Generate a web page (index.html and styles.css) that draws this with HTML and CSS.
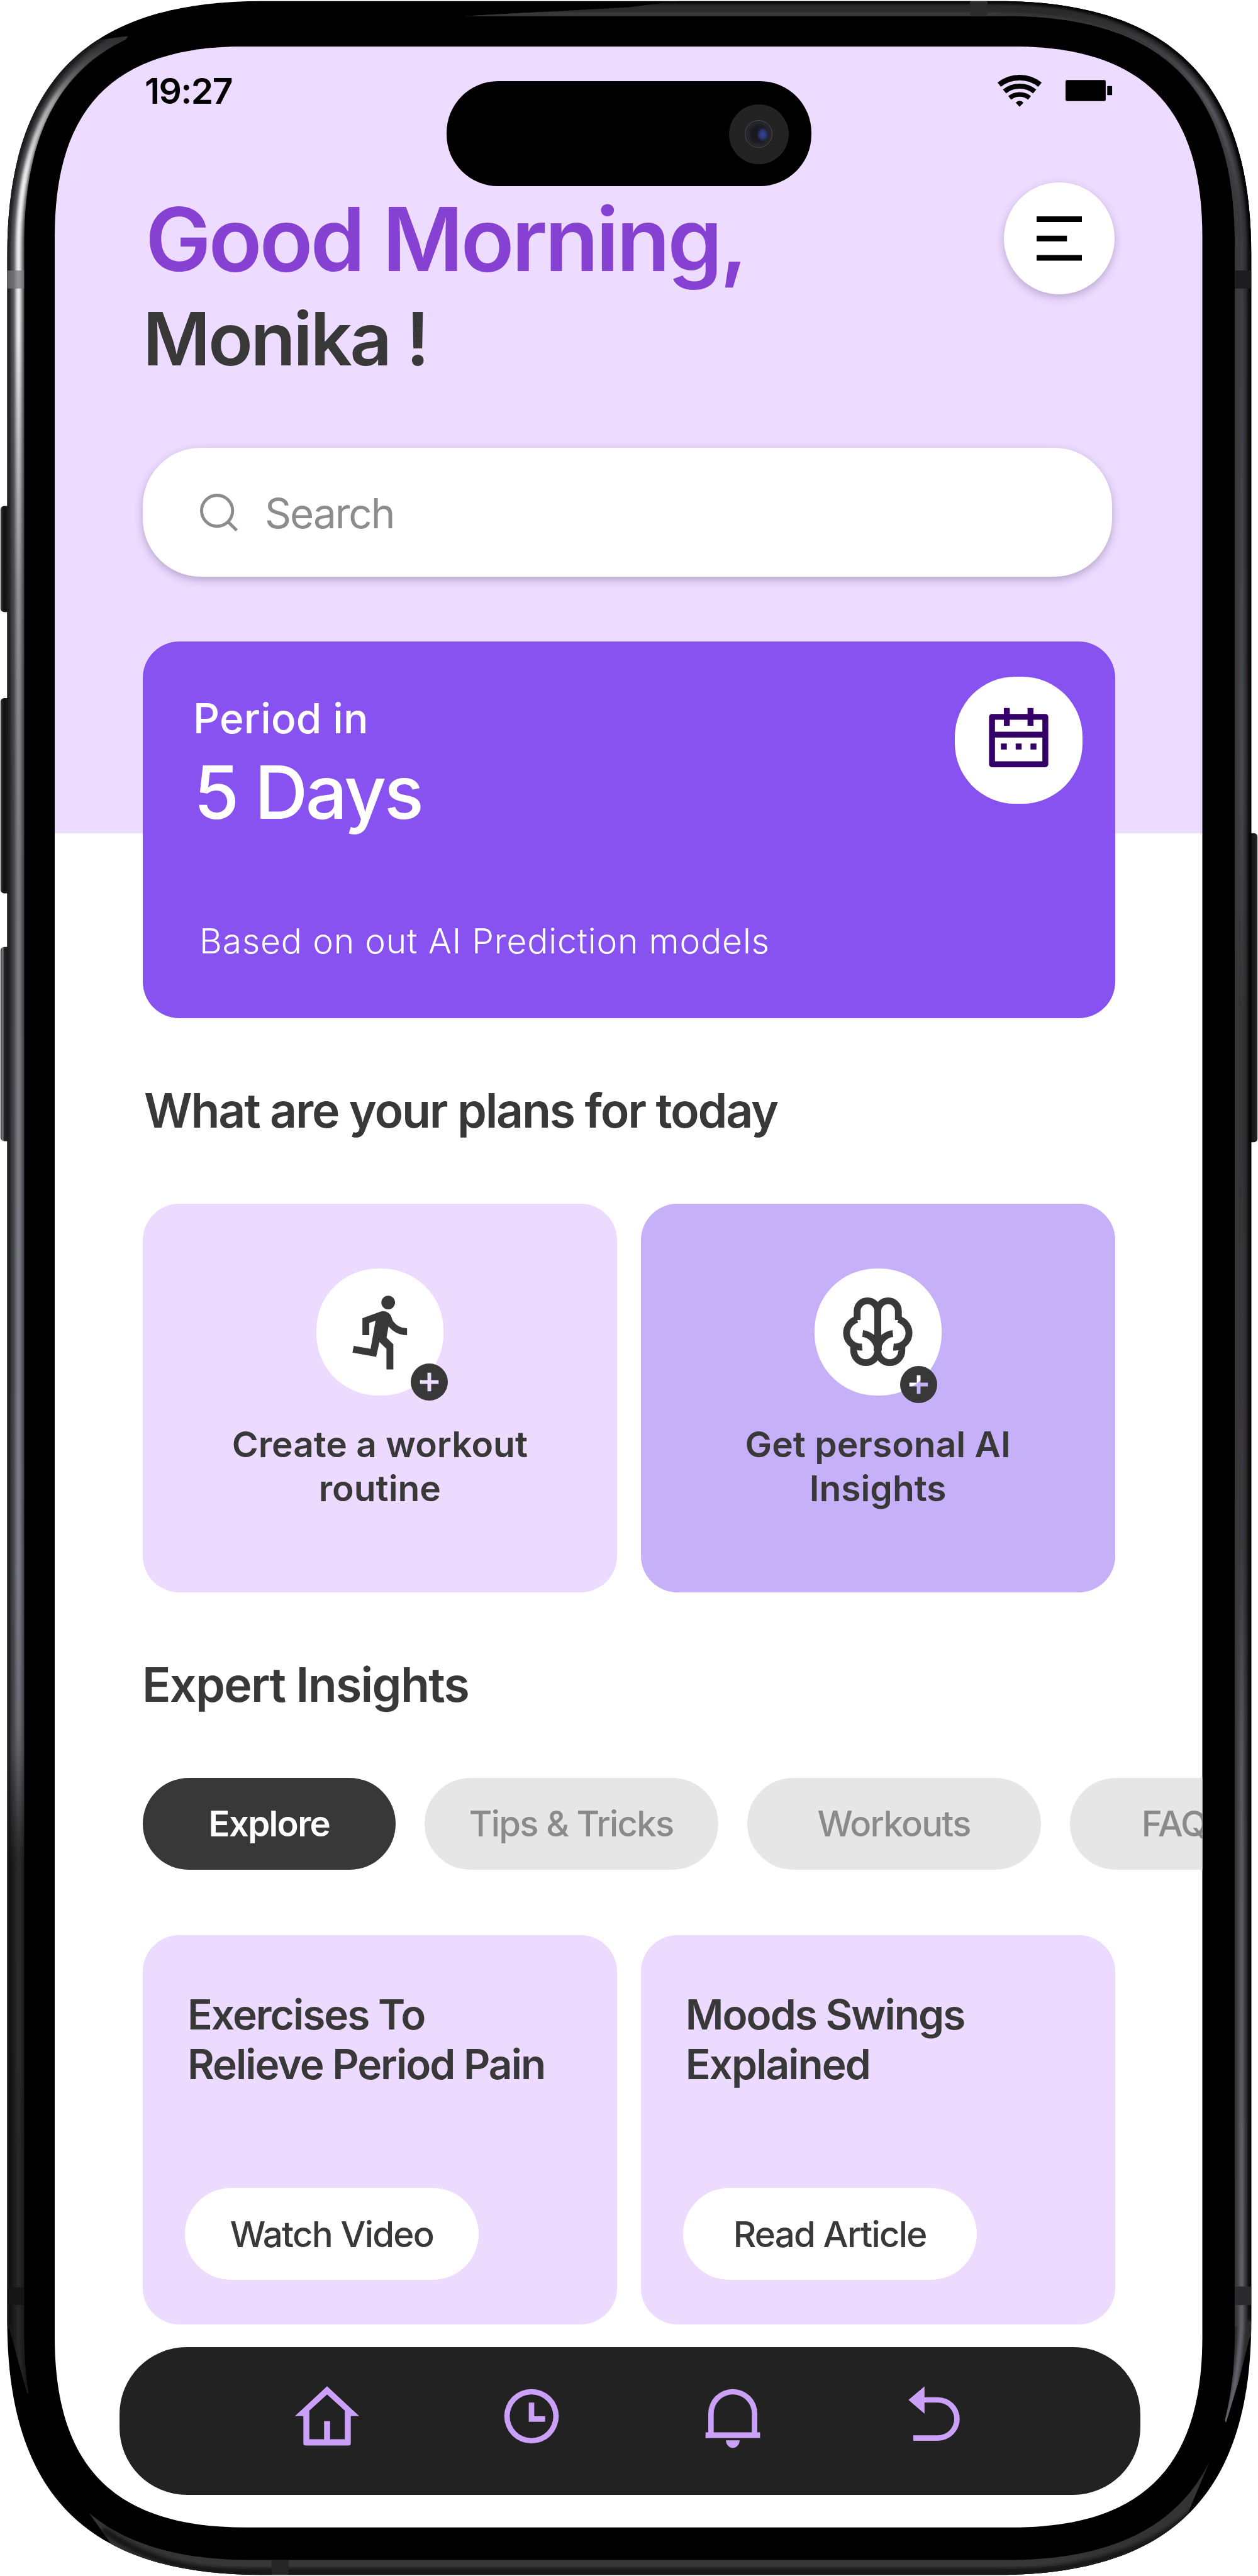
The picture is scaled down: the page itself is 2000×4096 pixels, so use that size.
FILE: index.html
```html
<!DOCTYPE html>
<html lang="en">
<head>
<meta charset="utf-8">
<title>Cycle tracker</title>
<link rel="stylesheet" href="styles.css">
</head>
<body>
<div class="phone">
  <svg class="frame" viewBox="0 0 2442 5000" preserveAspectRatio="none" aria-hidden="true">
    <defs>
      <clipPath id="band"><path clip-rule="evenodd" d="M14 496C14 158 170 2 508 2H1935C2273 2 2429 158 2429 496V4504C2429 4842 2273 4998 1935 4998H508C170 4998 14 4842 14 4504ZM47 475C47 171 187 31 491 31H1953C2257 31 2397 171 2397 475V4525C2397 4829 2257 4969 1953 4969H491C187 4969 47 4829 47 4525Z"/></clipPath>
      <clipPath id="leftCut"><path d="M249 70L187 78L0 190V4500L18 4520L53 4646L90 4646V300Z"/></clipPath>
      <clipPath id="topCut"><path d="M905 31L1221 14L1330 0H2442V4500L2425 4540L2405 4620L2380 4702L2350 4640V600L1900 120H905Z"/></clipPath>
      <clipPath id="bottomCut"><path d="M173 4878L223 4948L260 5000H2200L2305 4880L2347 4780L2200 4800L1900 4900H400Z"/></clipPath>
      <filter id="soft" x="-20%" y="-5%" width="140%" height="110%"><feGaussianBlur stdDeviation="3"/></filter>
      <linearGradient id="leftBase" gradientUnits="userSpaceOnUse" x1="0" y1="0" x2="0" y2="5000">
        <stop offset="0" stop-color="#2c2c2e"/><stop offset=".1" stop-color="#4a4a4e"/><stop offset=".3" stop-color="#3c3c40"/><stop offset=".6" stop-color="#404047"/><stop offset=".68" stop-color="#404045"/><stop offset=".725" stop-color="#191919"/><stop offset="1" stop-color="#181818"/>
      </linearGradient>
      <linearGradient id="leftShine" gradientUnits="userSpaceOnUse" x1="0" y1="0" x2="0" y2="5000">
        <stop offset=".015" stop-color="#555" stop-opacity="0"/><stop offset=".04" stop-color="#aaa"/><stop offset=".07" stop-color="#f4f4f4"/><stop offset=".13" stop-color="#eee"/><stop offset=".17" stop-color="#c4c4c8"/><stop offset=".23" stop-color="#929297"/><stop offset=".35" stop-color="#7a7a80"/><stop offset=".6" stop-color="#7f7e87"/><stop offset=".67" stop-color="#6e6d75"/><stop offset=".72" stop-color="#2b2b2b"/><stop offset="1" stop-color="#242424"/>
      </linearGradient>
      <linearGradient id="rightShine" gradientUnits="userSpaceOnUse" x1="0" y1="0" x2="0" y2="5000">
        <stop offset="0" stop-color="#232323"/><stop offset=".015" stop-color="#3c3c40"/><stop offset=".04" stop-color="#5b5a63"/><stop offset=".08" stop-color="#3c3c40"/><stop offset=".2" stop-color="#46464c"/><stop offset=".3" stop-color="#4c4b54"/><stop offset=".4" stop-color="#343434"/><stop offset=".6" stop-color="#3c3b42"/><stop offset=".68" stop-color="#5c5b64"/><stop offset="1" stop-color="#6c6a73"/>
      </linearGradient>
      <linearGradient id="bottomMetal" gradientUnits="userSpaceOnUse" x1="0" y1="4955" x2="0" y2="5000">
        <stop offset="0" stop-color="#343434"/><stop offset=".55" stop-color="#383838"/><stop offset=".75" stop-color="#242426"/><stop offset="1" stop-color="#161617"/>
      </linearGradient>
      <linearGradient id="key" x1="0" x2="1"><stop offset="0" stop-color="#3a3a3c"/><stop offset=".3" stop-color="#101010"/><stop offset="1" stop-color="#262626"/></linearGradient>
      <linearGradient id="keyLit" x1="0" x2="1"><stop offset="0" stop-color="#2a2a2c"/><stop offset=".18" stop-color="#808086"/><stop offset=".36" stop-color="#1c1c1c"/><stop offset="1" stop-color="#2c2c2e"/></linearGradient>
    </defs>
    <rect x="1" y="982" width="22" height="206" rx="7" fill="url(#key)"/>
    <rect x="1" y="1355" width="22" height="379" rx="7" fill="url(#key)"/>
    <rect x="1" y="1838" width="22" height="377" rx="7" fill="url(#keyLit)"/>
    <rect x="2420" y="1617" width="21" height="600" rx="7" fill="url(#key)"/>
    <path d="M14 496C14 158 170 2 508 2H1935C2273 2 2429 158 2429 496V4504C2429 4842 2273 4998 1935 4998H508C170 4998 14 4842 14 4504Z"/>
    <g clip-path="url(#band)">
      <g clip-path="url(#leftCut)" fill="none">
        <path d="M491 17C180 17 31 171 31 485V4515C31 4750 90 4800 150 4850" stroke="url(#leftBase)" stroke-width="36"/>
        <g filter="url(#soft)">
          <path d="M495 22C186 22 36 175 36 485V4515C36 4750 90 4800 150 4850" stroke="url(#leftShine)" stroke-width="12"/>
          <path d="M500 4C175 4 15 160 15 490V4515" stroke="#0c0c0d" stroke-width="7"/>
        </g>
      </g>
      <g clip-path="url(#topCut)" fill="none">
        <path d="M900 17H1944C2258 17 2413 171 2413 485V4515C2413 4600 2400 4700 2370 4760" stroke="#2b2b2b" stroke-width="36"/>
        <path d="M900 28H1944C2250 28 2401 175 2401 485V4515" stroke="#383838" stroke-width="9"/>
        <g filter="url(#soft)">
          <path d="M1944 20C2255 20 2410 171 2410 485V4515C2405 4600 2395 4650 2375 4720" stroke="url(#rightShine)" stroke-width="10"/>
          <path d="M900 2H1935C2273 2 2428 160 2428 496V4504" stroke="#000" stroke-width="10"/>
        </g>
      </g>
      <g clip-path="url(#bottomCut)">
        <rect x="150" y="4750" width="2250" height="250" fill="url(#bottomMetal)"/>
        <path d="M200 4910C290 4975 380 4993 508 4993H1935C2100 4993 2240 4950 2320 4870" fill="none" stroke="#141415" stroke-width="12" filter="url(#soft)"/>
      </g>
      <g fill="#1c1c1e">
        <rect x="14" y="525" width="33" height="35" fill="#77777b" fill-opacity=".75"/>
        <rect x="2397" y="525" width="33" height="35"/>
        <rect x="1883" y="0" width="34" height="31" fill="#2c2c2e"/>
        <rect x="2397" y="4438" width="33" height="36" fill="#2a2a2e"/>
        <rect x="14" y="4440" width="33" height="34" fill="#151515"/>
        <rect x="527" y="4969" width="33" height="31" fill="#262626"/>
      </g>
    </g>
  </svg>

  <main class="screen">
    <div class="island"><span class="camera"><i class="lens"></i></span></div>
    <header class="status">
      <span class="time">19:27</span>
      <span class="status-icons">
        <svg class="wifi" viewBox="1934 144 88 63"><g fill="none" stroke="#000"><path stroke-width="10.5" d="M1938.4 164.1A63.7 63.7 0 0 1 2017.6 164.1"/><path stroke-width="10" d="M1948.7 177.2A47 47 0 0 1 2007.3 177.2"/><path stroke-width="9" d="M1958.7 189.7A31 31 0 0 1 1997.3 189.7"/></g><path d="M1970.5 199Q1978 192 1985.5 199L1978 207Z"/></svg>
        <svg class="battery" viewBox="0 0 91 41"><rect width="78" height="41" rx="3"/><rect x="81" y="11.5" width="9.5" height="18" rx="1.5"/></svg>
      </span>
    </header>

    <section class="greeting">
      <div>
        <h1 class="hello">Good Morning,</h1>
        <p class="name">Monika !</p>
      </div>
      <button class="menu" aria-label="Menu"><svg viewBox="0 0 88 86"><path d="M0 0H88V11H0ZM0 37.500H59V48.500H0ZM0 75H88V86H0Z"/></svg></button>
    </section>

    <div class="search">
      <svg viewBox="0 0 73 73" fill="none" stroke="#8c8c8c" stroke-width="6"><circle cx="33" cy="33" r="30"/><path d="M54 54L71 71"/></svg>
      <span class="search-text">Search</span>
    </div>

    <section class="prediction">
      <div class="prediction-copy">
        <p class="period">Period in</p>
        <p class="days">5 Days</p>
        <p class="based">Based on out AI Prediction models</p>
      </div>
      <span class="calendar"><svg viewBox="0 0 24 24" fill="#340068"><path fill-rule="evenodd" d="M7 1h2v2h6V1h2v2h4a1 1 0 0 1 1 1v16a1 1 0 0 1-1 1H3a1 1 0 0 1-1-1V4a1 1 0 0 1 1-1h4ZM4 5v4h16V5h-3v2h-2V5H9v2H7V5ZM4 11v8h16v-8ZM6 13h2v2H6ZM11 13h2v2h-2ZM16 13h2v2h-2Z"/></svg></span>
    </section>

    <h2 class="title plans-title">What are your plans for today</h2>
    <section class="pair plans">
      <article class="plan">
        <span class="disc">
          <svg class="glyph" viewBox="-1 0 24 24"><path d="M9.830 8.790L8 9.456V13H6V8.050h.015l5.268-1.918c.244-.093.510-.140.782-.131a2.616 2.616 0 0 1 2.427 1.820c.186.583.356.977.510 1.182A4.992 4.992 0 0 0 19 11v2a6.986 6.986 0 0 1-5.402-2.547l-.581 3.297L15 15.670V23h-2v-5.986l-2.050-1.987-.947 4.298-6.894-1.215.348-1.970 4.924.868zM13.500 5.500a2 2 0 1 1 0-4 2 2 0 0 1 0 4z"/></svg>
          <svg class="plus" viewBox="2 2 20 20"><path d="M12 22a10 10 0 1 1 0-20 10 10 0 0 1 0 20zM11 11H7v2h4v4h2v-4h4v-2h-4V7h-2z"/></svg>
        </span>
        <p class="plan-text">Create a workout<br>routine</p>
      </article>
      <article class="plan plan-deep">
        <span class="disc">
          <svg class="glyph" viewBox="-12 -12 24 24" fill="none" stroke="#383838" stroke-width="2"><path id="lobe" d="M0 2V-6A3 3 0 0 0-6-6V-3.400M-6-3.600A4.100 4.100 0 0 0-4.550 4.450M-7 3.800V5.500A3.500 3.500 0 0 0 0 5.500A5 5 0 0 0-4.400.540"/><use href="#lobe" transform="scale(-1 1)"/><path fill="#383838" stroke="none" d="M-1 1L1 1L1.200 5.500H-1.200Z"/></svg>
          <svg class="plus" viewBox="2 2 20 20"><path d="M12 22a10 10 0 1 1 0-20 10 10 0 0 1 0 20zM11 11H7v2h4v4h2v-4h4v-2h-4V7h-2z"/></svg>
        </span>
        <p class="plan-text">Get personal AI<br>Insights</p>
      </article>
    </section>

    <h2 class="title expert-title">Expert Insights</h2>
    <nav class="chips">
      <span class="chip chip-on">Explore</span>
      <span class="chip">Tips &amp; Tricks</span>
      <span class="chip">Workouts</span>
      <span class="chip chip-last">FAQs</span>
    </nav>

    <section class="pair insights">
      <article class="insight"><h3>Exercises To<br>Relieve Period Pain</h3><a class="action">Watch Video</a></article>
      <article class="insight"><h3>Moods Swings<br>Explained</h3><a class="action">Read Article</a></article>
    </section>

    <nav class="tabs">
      <svg viewBox="0 0 24 24"><path fill-rule="evenodd" d="M12 1L23.800 11.950H20.700V22a.75.75 0 0 1-.75.75H4.050A.75.75 0 0 1 3.300 22V11.950H.200ZM12 4L5.500 9.900V20.400H10.900V13.800H13.100V20.400H18.500V9.900Z"/></svg>
      <svg viewBox="0 0 24 24"><path fill-rule="evenodd" d="M12 2a10 10 0 1 1 0 20 10 10 0 0 1 0-20ZM12 4a8 8 0 1 0 0 16 8 8 0 0 0 0-16ZM11 7h2v5h4v2h-6Z"/></svg>
      <svg viewBox="0 0 24 24"><path fill-rule="evenodd" d="M3 17.900V11a9 9 0 0 1 18 0V17.900H22V20H2V17.900ZM5 17.900H19V11A7 7 0 0 0 5 11ZM9.500 20.800H14.500A2.500 2.800 0 0 1 9.500 20.800Z"/></svg>
      <svg viewBox="0 0 24 24"><path d="M8.500 5H13.400a8 8 0 0 1 0 16H4.400v-2h9a6 6 0 0 0 0-12H8.500v4.050L2.600 6 8.500 1.050z"/></svg>
    </nav>
  </main>
</div>
</body>
</html>
```
FILE: styles.css
```css
* { box-sizing: border-box; margin: 0; padding: 0; }
body { background: #fff; font-family: Inter, sans-serif; color: #383838; }
.phone { position: relative; width: 2000px; height: 4096px; padding: 73.700px 88.500px 77px 87px; overflow: hidden; }
.frame { position: absolute; left: 0; top: 0; width: 2000px; height: 4096px; }
.screen {
  position: relative; height: 3945px; padding: 39px 139px 0 140px; overflow: hidden;
  display: flex; flex-direction: column;
  background: linear-gradient(#eddcff 1250.800px, #fff 1250.800px);
  clip-path: path("M0 303C0 95.400 95.400 0 303 0H1521.500C1729 0 1824.500 95.400 1824.500 303V3642C1824.500 3849.600 1729 3945 1521.500 3945H303C95.400 3945 0 3849.600 0 3642Z");
}
.screen > * { flex-shrink: 0; }
.island { position: absolute; left: 622.500px; top: 55px; width: 580.500px; height: 167px; border-radius: 82px; background: #000; }
.camera { position: absolute; left: 449px; top: 37px; width: 95px; height: 95px; border-radius: 50%; background: #232323; display: grid; place-items: center; }
.lens { width: 44px; height: 44px; border-radius: 50%; border: 1.500px solid #4c4d54; background: radial-gradient(ellipse 30% 36% at 66% 52%, #33489a 0, #29356f 45%, transparent 75%), radial-gradient(circle, #191922 40%, #26262c 60%, #1a1a1e 100%); }
.status { display: flex; justify-content: space-between; height: 66px; color: #000; }
.time { font-size: 57px; line-height: 64px; font-weight: 600; margin-left: 3px; letter-spacing: -.029em; }
.status-icons { display: flex; gap: 37px; margin-right: 4px; }
.wifi { width: 72px; height: 52px; margin-top: 5px; }
.battery { width: 74.500px; height: 34px; margin-top: 14px; }
.greeting { display: flex; justify-content: space-between; margin-top: 126.700px; height: 303.400px; }
.hello { font-size: 139.900px; line-height: 150px; font-weight: 600; color: #8741d2; white-space: nowrap; letter-spacing: -.03em; margin-left: 4px; }
.name { font-size: 116.600px; line-height: 140px; font-weight: 600; margin-top: 13.400px; letter-spacing: -.03em; }
.menu { width: 175.500px; height: 178px; margin: -15px 1px 0 0; border: 0; border-radius: 50%; background: #fff; box-shadow: 0 5px 14px rgba(60, 30, 90, .28); display: grid; place-items: center; }
.menu svg { width: 72px; height: 70.500px; }
.search { display: flex; align-items: center; width: 1540.500px; height: 205.500px; margin-top: 103.200px; padding-left: 91px; border-radius: 92px; background: #fff; box-shadow: 0 5px 14px rgba(60, 30, 90, .3); }
.search svg { width: 60px; height: 60px; }
.search-text { font-size: 65.500px; color: #8c8c8c; margin-left: 43px; letter-spacing: -.03em; padding-top: 4px; }
.prediction { display: flex; justify-content: space-between; height: 599px; margin-top: 102.500px; padding: 56px 51.500px 0 80px; border-radius: 58px; background: #8752ef; color: #fff; }
.prediction-copy { padding-top: 26px; }
.period { font-size: 65.700px; line-height: 80px; font-weight: 500; letter-spacing: .200px; }
.days { font-size: 117.200px; line-height: 140px; font-weight: 500; margin: 7px 0 0 1px; letter-spacing: -.03em; }
.based { font-size: 55.200px; line-height: 70px; font-weight: 300; margin: 132px 0 0 10px; letter-spacing: .800px; }
.calendar { width: 203px; height: 202.500px; border-radius: 96px; background: #fff; display: grid; place-items: center; }
.calendar svg { width: 113px; height: 113px; }
.title { font-size: 75.200px; line-height: 90px; font-weight: 600; letter-spacing: -.03em; }
.plans-title { margin: 101.700px 0 0 2px; }
.pair { display: grid; grid-template-columns: 1fr 1fr; gap: 38px; }
.plans { margin-top: 103.300px; height: 618px; }
.plan { display: flex; flex-direction: column; align-items: center; padding-top: 103px; border-radius: 58px; background: #eddbff; }
.plan-deep { background: #c6b0f8; }
.disc { position: relative; width: 202px; height: 202px; border-radius: 98px; background: #fff; display: grid; place-items: center; }
.glyph { width: 131px; height: 131px; fill: #383838; }
.plan-deep .glyph { fill: none; }
.plus { position: absolute; left: 150px; top: 151px; width: 59px; height: 59px; fill: #383838; }
.plan-deep .plus { left: 136px; top: 155.500px; }
.plan-text { margin-top: 43px; font-size: 56.900px; line-height: 70px; font-weight: 600; text-align: center; letter-spacing: 0; }
.expert-title { margin: 101.700px 0 0 -1px; letter-spacing: -.0225em; }
.chips { display: flex; gap: 46px; margin-top: 103.800px; height: 146px; }
.chip { flex: none; width: 467px; border-radius: 73px; background: #e6e6e6; color: #8a8a8a; font-size: 56.200px; line-height: 147px; font-weight: 500; text-align: center; letter-spacing: -.03em; }
.chip-on { width: 401.700px; background: #383838; color: #fff; font-weight: 600; }
.chip-last { text-align: left; padding-left: 114px; }
.insights { margin-top: 103.500px; height: 619px; }
.insight { display: flex; flex-direction: column; justify-content: space-between; align-items: flex-start; padding: 87px 67px 71px; border-radius: 58px; background: #eddbff; }
.insight h3 { font-size: 65.800px; line-height: 79px; font-weight: 600; white-space: nowrap; letter-spacing: -.03em; margin-left: 4px; }
.action { width: 467px; height: 146px; border-radius: 73px; background: #fff; font-size: 56.400px; line-height: 147px; font-weight: 500; text-align: center; letter-spacing: -.03em; }
.tabs { display: flex; align-items: center; width: 1623px; height: 235px; margin: 36.500px 0 0 -37.500px; padding: 0 0 16px 278px; border-radius: 107px; background: #222; }
.tabs svg { width: 104px; height: 104px; fill: #cba0f8; flex: none; margin-right: 216px; }
.tabs svg:first-child { margin-right: 221px; }
```
